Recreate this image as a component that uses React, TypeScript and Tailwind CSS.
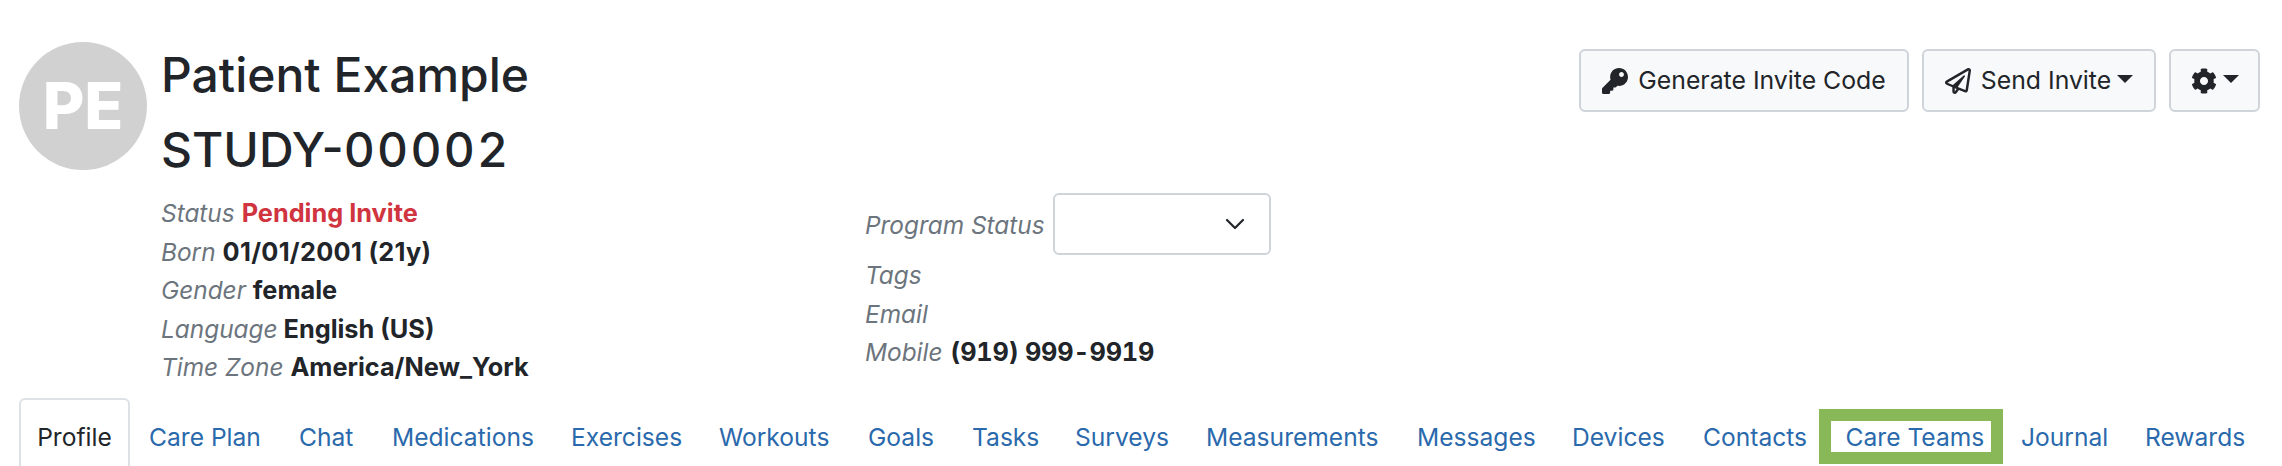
import { FaKey, FaRegPaperPlane, FaCog } from "react-icons/fa";

const tabs: [string, string][] = [
  ["Care Plan", "w-[150px]"],
  ["Chat", "w-[93px]"],
  ["Medications", "w-[179px]"],
  ["Exercises", "w-[148px]"],
  ["Workouts", "w-[149px]"],
  ["Goals", "w-[104px]"],
  ["Tasks", "w-[103px]"],
  ["Surveys", "w-[131px]"],
  ["Measurements", "w-[211px]"],
  ["Messages", "w-[155px]"],
  ["Devices", "w-[131px]"],
  ["Contacts", "w-[143.5px]"],
];

function Caret() {
  return <span className="ml-[6px] mb-[4px] inline-block h-0 w-0 border-x-[8px] border-t-[8px] border-x-transparent border-t-[#212529]" />;
}

function Row({ label, children }: { label: string; children?: React.ReactNode }) {
  return (
    <div className="h-[38.5px] whitespace-nowrap text-[25.3px] leading-[38.5px]">
      <i className="text-[24.4px] font-normal text-[#6c757d]">{label}</i> {children}
    </div>
  );
}

export default function App() {
  return (
    <div className="h-[466px] w-[2282px] overflow-hidden bg-white font-['Inter','Liberation_Sans',sans-serif] text-[24.8px] text-[#212529]">
      <div className="flex h-[398px] pl-[19px] pr-[22px] pt-[37px]">
        <div className="mt-[5px] flex h-[128px] w-[128px] shrink-0 items-center justify-center rounded-full bg-[#d1d1d1] text-[64px] font-extrabold text-white">
          PE
        </div>
        <div className="ml-[14px]">
          <h1 className="text-[48px] font-medium leading-[75px]">Patient Example</h1>
          <h2 className="text-[48px] font-medium leading-[75px]">
            STUDY-<span className="tracking-[2.2px] tabular-nums">00002</span>
          </h2>
          <div className="mt-[7px] flex">
            <div className="w-[704px] font-bold">
              <Row label="Status"><span className="ml-[1px] text-[#d0343f]">Pending Invite</span></Row>
              <Row label="Born"><span className="ml-[1px] tracking-[0.3px]">01/01/2001 (21y)</span></Row>
              <Row label="Gender"><span className="ml-[1px]">female</span></Row>
              <Row label="Language">English (US)</Row>
              <Row label="Time Zone"><span className="ml-[1px]">America/New_York</span></Row>
            </div>
            <div className="-mt-px font-bold">
              <div className="flex h-[62px] items-center">
                <i className="mt-[2px] text-[24.4px] font-normal text-[#6c757d]">Program Status</i>
                <div className="ml-[8.5px] flex h-[62px] w-[218px] items-center justify-end rounded-[6px] border-2 border-[#ced4da] pr-[24px]">
                  <svg width="20" height="12" viewBox="0 0 20 12" fill="none" stroke="#212529" strokeWidth="2.2" strokeLinecap="round" strokeLinejoin="round">
                    <path d="M2 2l8 8 8-8" />
                  </svg>
                </div>
              </div>
              <div className="pt-px">
                <Row label="Tags" />
                <Row label="Email" />
                <Row label="Mobile"><span className="ml-[2px] tracking-[-0.2px] tabular-nums">(919) 999-9919</span></Row>
              </div>
            </div>
          </div>
        </div>
        <div className="ml-auto mt-[12px] flex h-[63px] gap-[13px]">
          <button className="flex w-[330px] items-center justify-center gap-[10px] rounded-[6px] border-2 border-[#ced4da] bg-[#f8f9fa]">
            <FaKey className="h-[26px] w-[26px]" />
            Generate Invite Code
          </button>
          <button className="flex w-[234px] items-center justify-center gap-[10px] rounded-[6px] border-2 border-[#ced4da] bg-[#f8f9fa]">
            <FaRegPaperPlane className="h-[26px] w-[26px]" />
            <span className="flex items-center">Send Invite<Caret /></span>
          </button>
          <button className="flex w-[91px] items-center justify-center rounded-[6px] border-2 border-[#ced4da] bg-[#f8f9fa]">
            <FaCog className="h-[26px] w-[26px]" />
            <Caret />
          </button>
        </div>
      </div>
      <nav className="flex h-[68px] pl-[19px] text-[24.6px] text-[#2a69ac]">
        <div className="flex h-[80px] w-[111px] items-center justify-center rounded-t-[6px] border-2 border-[#dee2e6] text-[#212529]">
          <span className="-mt-[2px]">Profile</span>
        </div>
        <div className="w-[19px]" />
        {tabs.map(([t, w]) => (
          <div key={t} className={`${w} whitespace-nowrap pt-[20px] leading-[38px]`}>{t}</div>
        ))}
        <div className="relative w-[174.5px] whitespace-nowrap pt-[20px] leading-[38px]">
          <span className="-ml-[1px]">Care Teams</span>
          <span className="absolute left-[-27.5px] top-[11px] h-[55px] w-[184px] border-[12px] border-[#88b858]" />
        </div>
        <div className="w-[124px] whitespace-nowrap pt-[20px] leading-[38px]">Journal</div>
        <div className="whitespace-nowrap pt-[20px] leading-[38px]">Rewards</div>
      </nav>
    </div>
  );
}
